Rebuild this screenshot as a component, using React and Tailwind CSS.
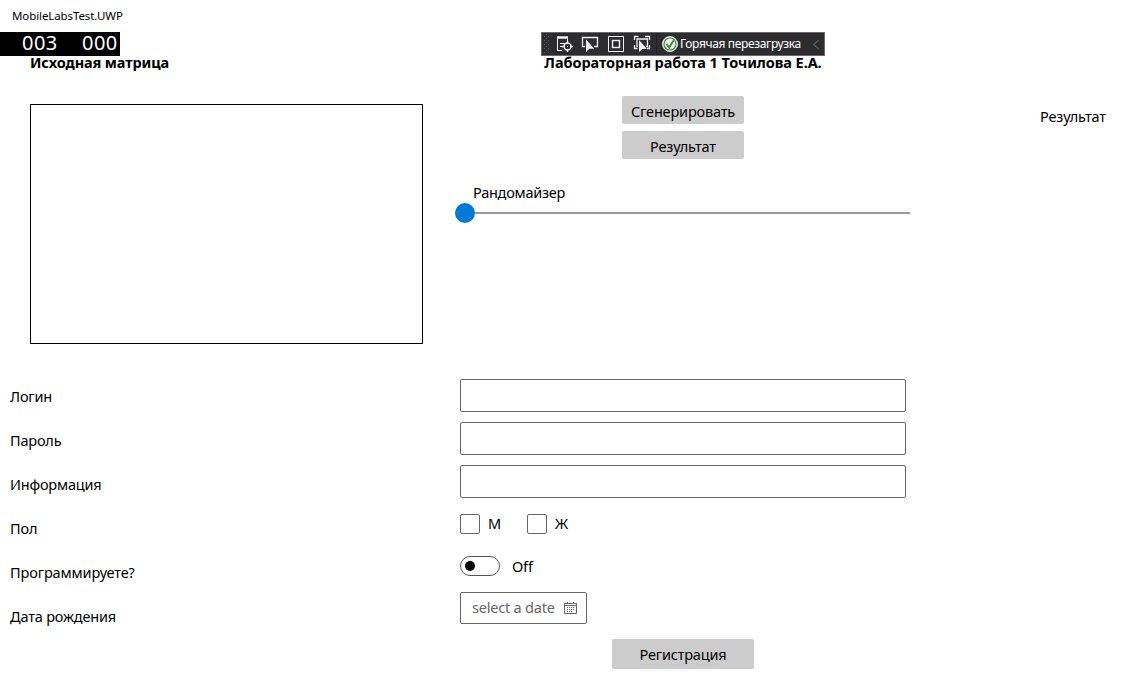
const labels = [
  ['Логин', 'tracking-[-0.2px]'],
  ['Пароль', 'tracking-[-0.2px]'],
  ['Информация', 'tracking-[-0.2px]'],
  ['Пол', 'tracking-[-0.15px]'],
  ['Программируете?', 'tracking-[-0.13px]'],
  ['Дата рождения', 'tracking-[-0.17px]'],
];

function FrameCounter() {
  return (
    <div className="absolute left-0 top-8 flex h-6 w-[120px] items-center bg-black pl-[22px] text-[20px] leading-[22px] tracking-[0.45px] text-white">
      <span className="-mt-0.5 w-[60px]">003</span>
      <span className="-mt-0.5">000</span>
    </div>
  );
}

function DebugToolbar() {
  return (
    <div className="absolute left-[541px] top-8 flex h-6 w-[284px] items-center border border-[#686868] bg-[#2d2d30] text-white">
      <svg width="138" height="22" viewBox="542 33 138 22" fill="none" stroke="#f0f0f0">
        <g fill="#55555a" stroke="none">
          {[36, 40, 44, 48, 52].map((y) => (
            <g key={y}>
              <rect x="544" y={y} width="1" height="1" />
              <rect x="548" y={y} width="1" height="1" />
              <rect x="546" y={y - 2} width="1" height="1" />
            </g>
          ))}
        </g>
        <path d="M557.5 37v14M557 50.500h5M567.500 37v4M560 43.500h5M560 46.500h2" />
        <path d="M557 37.500h11" strokeWidth="2.500" />
        <circle cx="567.500" cy="46.500" r="3.500" strokeWidth="1.400" />
        <path d="M567.500 41v3M567.500 49v3M562 46.500h3M570 46.500h3" strokeWidth="1.300" />
        <rect x="567" y="46" width="1" height="1" fill="#f0f0f0" stroke="none" />
        <path d="M585 46.500h-2.500v-9h15v9H594" strokeWidth="1.300" />
        <path d="M586 39.500v12.500l3.300-3.200h5z" fill="#f0f0f0" stroke="none" />
        <rect x="608.500" y="36.500" width="15" height="15" />
        <rect x="612.500" y="40.500" width="7" height="7" strokeWidth="1.400" />
        <path d="M634.500 40v-3.500h4M645 36.500h4.500V40M634.500 45v3.500h3M649.500 45v3.500H647" strokeWidth="1.300" />
        <path d="M638 46.500h-1v-7.500h10.500v7.500H646" strokeWidth="1.300" />
        <path d="M639 40v12l3.200-3.100h4.800z" fill="#f0f0f0" stroke="none" />
        <path d="M656.500 34v20" stroke="#222225" />
        <circle cx="670" cy="44" r="7.500" fill="#f3f3f3" stroke="#e8e8e8" />
        <circle cx="670" cy="44" r="6" fill="#f3f3f3" stroke="#388a34" strokeWidth="1.200" />
        <path d="M666.500 44l2.700 3.500 4.300-7" stroke="#388a34" strokeWidth="2" />
      </svg>
      <span className="w-[122px] whitespace-nowrap text-[12px] leading-[22px] tracking-[-0.35px]">Горячая перезагрузка</span>
      <svg width="22" height="22" viewBox="802 33 22 22" fill="none" stroke="#77777a">
        <path d="M818.500 40l-4.500 4.500 4.500 4.500" />
      </svg>
    </div>
  );
}

function CalendarIcon() {
  return (
    <svg width="13" height="12" viewBox="0 0 13 12" fill="none" stroke="#666">
      <path d="M.5 1.500h12v10H.5zM.5 3.500h12M3.500 0v2M9.500 0v2" />
      <path d="M3 5.500h8M3 7.500h8M3 9.500h6" strokeDasharray="1 1" />
    </svg>
  );
}

function TextField() {
  return <input className="h-[33px] w-[446px] rounded-[2px] border border-[#666] px-2 outline-none" />;
}

function CheckOption({ text, className }) {
  return (
    <label className={'flex items-center ' + className}>
      <span className="mr-2 size-5 rounded-[2px] border border-[#666]" />
      <span className="pb-0.5">{text}</span>
    </label>
  );
}

export default function App() {
  return (
    <div className="relative h-[693px] w-[1140px] overflow-hidden bg-white font-['Noto_Sans',sans-serif] text-[14.5px] leading-5 text-black">
      <header className="h-8 pl-3 text-[11.5px] leading-8 tracking-[-0.1px]">MobileLabsTest.UWP</header>

      <section className="flex h-[343px]">
        <div className="w-[455px] pl-[30px] pt-[21px]">
          <h2 className="h-[51px] whitespace-nowrap font-bold leading-[18px] tracking-[-0.12px]">Исходная матрица</h2>
          <div className="h-[240px] w-[393px] border border-black" />
        </div>
        <div className="flex w-[456px] flex-col items-center pt-[21px]">
          <h1 className="h-[43px] whitespace-nowrap font-bold leading-[18px] tracking-[-0.07px]">Лабораторная работа 1 Точилова Е.А.</h1>
          <button className="mb-[7px] h-7 w-[122px] rounded-[2px] bg-[#ccc] pt-px tracking-[-0.17px]">Сгенерировать</button>
          <button className="h-7 w-[122px] rounded-[2px] bg-[#ccc] pt-px tracking-[-0.13px]">Результат</button>
          <div className="mt-6 h-5 w-full pl-[18px] leading-[18px] tracking-[-0.25px]">Рандомайзер</div>
          <div className="flex w-full items-center">
            <span className="size-5 rounded-full bg-[#0078d7]" />
            <span className="h-0.5 w-[435.4px] bg-[#999]" />
          </div>
        </div>
        <div className="pl-[129px] pt-[74px] tracking-[-0.13px]">Результат</div>
      </section>

      <section className="flex">
        <div className="w-[460px] pl-[10px]">
          {labels.map(([text, tracking]) => (
            <div key={text} className={'h-11 leading-[42px] ' + tracking}>{text}</div>
          ))}
        </div>
        <div className="flex w-[446px] flex-col pt-1">
          <div className="flex flex-col gap-[10px]">
            <TextField />
            <TextField />
            <TextField />
          </div>
          <div className="mt-4 flex h-5">
            <CheckOption text="М" className="w-[67px]" />
            <CheckOption text="Ж" className="" />
          </div>
          <div className="mt-[22px] flex h-5 items-center">
            <span className="mr-3 flex h-5 w-10 items-center rounded-full border border-[#555] pl-1">
              <span className="size-[10px] rounded-full bg-black" />
            </span>
            <span className="pb-px tracking-[-0.2px]">Off</span>
          </div>
          <div className="mt-4 flex h-8 w-[127px] items-center justify-between rounded-[2px] border border-[#666] pl-[11px] pr-[9px] text-[#666]">
            <span className="pb-0.5 tracking-[-0.2px]">select a date</span>
            <CalendarIcon />
          </div>
          <button className="ml-[152px] mt-[15px] h-[30px] w-[142px] rounded-[2px] bg-[#ccc] pb-px tracking-[-0.2px]">Регистрация</button>
        </div>
      </section>

      <FrameCounter />
      <DebugToolbar />
    </div>
  );
}
